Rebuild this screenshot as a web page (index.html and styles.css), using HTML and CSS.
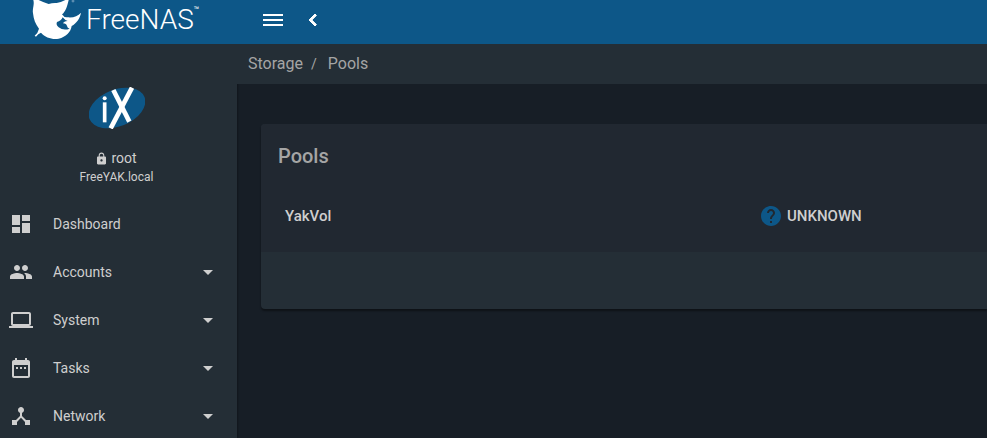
FILE: index.html
```html
<!DOCTYPE html>
<html lang="en">
<head>
    <meta charset="UTF-8">
    <meta name="viewport" content="width=device-width, initial-scale=1.0">
    <title>FreeNAS - Pools</title>
    <link rel="stylesheet" href="styles.css">
</head>
<body>
    <div class="app">
        <aside class="sidebar">
            <a class="logo" href="#">
                <svg class="logo-shark" viewBox="0 0 150 132" aria-hidden="true">
                    <path fill="#fff" d="M10 0 C14 14 7 24 9 40 C11 58 16 72 27 86 Q24 99 14 107 L18 110 Q24 101 33 98 C46 113 66 119 86 116 C108 111 122 97 125 78 C140 69 150 55 153 38 C143 49 130 54 112 52 Q102 53 96 43 C106 37 112 18 116 0 L106 0 Q92 7 80 9 Q68 8 56 12 Q40 7 26 0 Z"/>
                    <path fill="#0d5788" d="M98 52 Q104 60 113 63 Q101 64 99 70 Q109 70 111 78 Q112 84 119 86 Q100 93 86 82 Q77 74 81 66 Q93 63 98 52 Z"/>
                    <circle cx="129" cy="3" r="3" fill="none" stroke="#9bb9d0" stroke-width="2"/>
                </svg>
                <span class="logo-text">FreeNAS</span><span class="logo-tm">™</span>
            </a>

            <div class="profile">
                <svg class="profile-logo" viewBox="0 0 168 126" aria-hidden="true">
                    <ellipse cx="84" cy="63" rx="89" ry="55" transform="rotate(-22 84 63)" fill="#0d5788"/>
                    <g stroke="#fff" fill="none">
                        <path d="M47 46 V106" stroke-width="11"/>
                        <path d="M73 9 L121 104" stroke-width="14"/>
                        <path d="M129 2 L65 124" stroke-width="14"/>
                    </g>
                    <circle cx="47" cy="34" r="6" fill="#fff"/>
                </svg>
                <div class="profile-user">
                    <svg class="lock" viewBox="3 0 18 23" aria-hidden="true"><path d="M18 8h-1V6c0-2.760-2.240-5-5-5S7 3.240 7 6v2H6c-1.100 0-2 .9-2 2v10c0 1.100.9 2 2 2h12c1.100 0 2-.9 2-2V10c0-1.100-.9-2-2-2zm-6 9c-1.100 0-2-.9-2-2s.9-2 2-2 2 .9 2 2-.9 2-2 2zm3.100-9H8.900V6c0-1.710 1.390-3.100 3.100-3.100s3.100 1.390 3.100 3.100v2z"/></svg>
                    <span>root</span>
                </div>
                <div class="profile-host">FreeYAK.local</div>
            </div>

            <nav class="menu">
                <a class="menu-item" href="#">
                    <svg class="icon" viewBox="0 0 24 24"><path d="M3 13h8V3H3v10zm0 8h8v-6H3v6zm10 0h8V11h-8v10zm0-18v6h8V3h-8z"/></svg>
                    <span class="menu-label">Dashboard</span>
                </a>
                <a class="menu-item" href="#">
                    <svg class="icon" viewBox="0 0 24 24"><path d="M16 11c1.660 0 2.990-1.340 2.990-3S17.660 5 16 5s-3 1.340-3 3 1.340 3 3 3zm-8 0c1.660 0 2.990-1.340 2.990-3S9.660 5 8 5 5 6.340 5 8s1.340 3 3 3zm0 2c-2.330 0-7 1.170-7 3.500V19h14v-2.500c0-2.330-4.670-3.500-7-3.500zm8 0c-.29 0-.62.020-.97.050 1.160.84 1.970 1.970 1.970 3.450V19h6v-2.500c0-2.330-4.670-3.500-7-3.500z"/></svg>
                    <span class="menu-label">Accounts</span>
                    <svg class="icon" viewBox="0 0 24 24"><path d="M7 10l5 5 5-5z"/></svg>
                </a>
                <a class="menu-item" href="#">
                    <svg class="icon" viewBox="0 0 24 24"><path d="M20 18c1.100 0 1.990-.9 1.990-2L22 6c0-1.100-.9-2-2-2H4c-1.100 0-2 .9-2 2v10c0 1.100.9 2 2 2H0v2h24v-2h-4zM4 6h16v10H4V6z"/></svg>
                    <span class="menu-label">System</span>
                    <svg class="icon" viewBox="0 0 24 24"><path d="M7 10l5 5 5-5z"/></svg>
                </a>
                <a class="menu-item" href="#">
                    <svg class="icon" viewBox="0 0 24 24"><path d="M9 11H7v2h2v-2zm4 0h-2v2h2v-2zm4 0h-2v2h2v-2zm2-7h-1V2h-2v2H8V2H6v2H5c-1.110 0-1.990.9-1.990 2L3 20c0 1.100.89 2 2 2h14c1.100 0 2-.9 2-2V6c0-1.100-.9-2-2-2zm0 16H5V9h14v11z"/></svg>
                    <span class="menu-label">Tasks</span>
                    <svg class="icon" viewBox="0 0 24 24"><path d="M7 10l5 5 5-5z"/></svg>
                </a>
                <a class="menu-item" href="#">
                    <svg class="icon" viewBox="0 0 24 24"><path d="M17 16l-4-4V8.820C14.160 8.400 15 7.300 15 6c0-1.660-1.340-3-3-3S9 4.340 9 6c0 1.300.84 2.400 2 2.820V12l-4 4H3v5h5v-3.050l4-4.200 4 4.200V21h5v-5h-4z"/></svg>
                    <span class="menu-label">Network</span>
                    <svg class="icon" viewBox="0 0 24 24"><path d="M7 10l5 5 5-5z"/></svg>
                </a>
            </nav>
        </aside>

        <div class="content">
            <header class="topbar">
                <button type="button" class="icon-button" aria-label="Toggle menu">
                    <svg class="icon" viewBox="0 0 24 24"><path d="M2 6h20v2H2zM2 11h20v2H2zM2 16h20v2H2z"/></svg>
                </button>
                <button type="button" class="icon-button" aria-label="Collapse menu">
                    <svg class="icon" viewBox="0 0 24 24"><path d="M15.410 7.410L14 6l-6 6 6 6 1.410-1.410L10.830 12z" stroke="#fff"/></svg>
                </button>
            </header>

            <nav class="breadcrumb" aria-label="Breadcrumb">
                <a href="#">Storage</a>
                <span class="separator">/</span>
                <a href="#">Pools</a>
            </nav>

            <main class="page">
                <section class="card">
                    <h1>Pools</h1>
                    <div class="pool">
                        <span class="pool-name">YakVol</span>
                        <span class="pool-status">
                            <svg class="icon" viewBox="0 0 24 24" aria-hidden="true"><path d="M12 2C6.480 2 2 6.480 2 12s4.480 10 10 10 10-4.480 10-10S17.520 2 12 2zm1 17h-2v-2h2v2zm2.070-7.750l-.9.920C13.450 12.900 13 13.500 13 15h-2v-.5c0-1.100.45-2.100 1.170-2.830l1.240-1.260c.37-.36.59-.86.59-1.410 0-1.100-.9-2-2-2s-2 .9-2 2H8c0-2.210 1.790-4 4-4s4 1.790 4 4c0 .88-.36 1.680-.93 2.250z"/></svg>
                            UNKNOWN
                        </span>
                    </div>
                </section>
            </main>
        </div>
    </div>
</body>
</html>
```
FILE: styles.css
```css
* {
    box-sizing: border-box;
}
body {
    margin: 0;
    font-family: Roboto, "Liberation Sans", sans-serif;
    font-size: 14px;
    line-height: 20px;
    background-color: #171e26;
    color: #cfcfcf;
}
a {
    color: inherit;
    text-decoration: none;
}
.app {
    display: flex;
    height: 100vh;
    overflow: hidden;
}
.icon {
    width: 24px;
    height: 24px;
    fill: currentColor;
    flex-shrink: 0;
}

/* sidebar */
.sidebar {
    width: 237px;
    flex-shrink: 0;
    overflow: hidden;
    background-color: #242e36;
    box-shadow: 1px 0 2px rgba(0, 0, 0, 0.3);
}
.logo {
    display: flex;
    height: 44px;
    padding-left: 30px;
    background-color: #0d5788;
    color: #fff;
}
.logo-shark {
    width: 50px;
    height: 44px;
    overflow: visible;
}
.logo-text {
    margin-left: 6px;
    font-size: 28px;
    font-weight: 300;
    line-height: 40px;
}
.logo-tm {
    font-size: 9px;
}
.profile {
    padding: 43px 4px 0 0;
    text-align: center;
}
.profile-logo {
    display: block;
    width: 56px;
    height: 42px;
    margin: 0 auto 19px;
}
.profile-user {
    display: flex;
    justify-content: center;
    align-items: center;
    gap: 4px;
}
.lock {
    width: 11px;
    height: 13px;
    fill: currentColor;
}
.profile-host {
    font-size: 12px;
    line-height: 18px;
}
.menu {
    padding-top: 14px;
}
.menu-item {
    display: flex;
    align-items: center;
    height: 48px;
    padding: 0 17px 0 9px;
}
.menu-label {
    flex-grow: 1;
    margin-left: 20px;
}

/* top bar and breadcrumb */
.content {
    flex-grow: 1;
    min-width: 0;
}
.topbar {
    display: flex;
    align-items: center;
    gap: 16px;
    height: 44px;
    padding: 0 24px 4px;
    background-color: #0d5788;
}
.icon-button {
    display: flex;
    padding: 0;
    border: none;
    background: none;
    color: #fff;
    cursor: pointer;
}
.breadcrumb {
    display: flex;
    align-items: center;
    height: 40px;
    padding-left: 11px;
    background-color: #242e36;
    color: #a5a5a5;
    font-size: 16px;
}
.separator {
    margin: 0 11px 0 8px;
    font-size: 14px;
}

/* pools card */
.page {
    padding: 40px 0 0 24px;
}
.card {
    padding-bottom: 57px;
    border-radius: 4px 0 0 4px;
    background-color: #242e36;
    box-shadow: 0 2px 2px rgba(0, 0, 0, 0.4);
    overflow: hidden;
}
.card h1 {
    margin: 0;
    padding: 20px 17px;
    background-color: #212831;
    color: #a5a5a5;
    font-size: 20px;
    font-weight: 500;
    line-height: 24px;
}
.pool {
    display: grid;
    grid-template-columns: 474px 1fr;
    align-items: center;
    height: 64px;
    padding: 0 24px 8px;
    background-color: #212831;
    font-size: 15px;
    font-weight: 500;
}
.pool-status {
    display: flex;
    align-items: center;
    gap: 4px;
}
.pool-status .icon {
    color: #0d5788;
}
```
